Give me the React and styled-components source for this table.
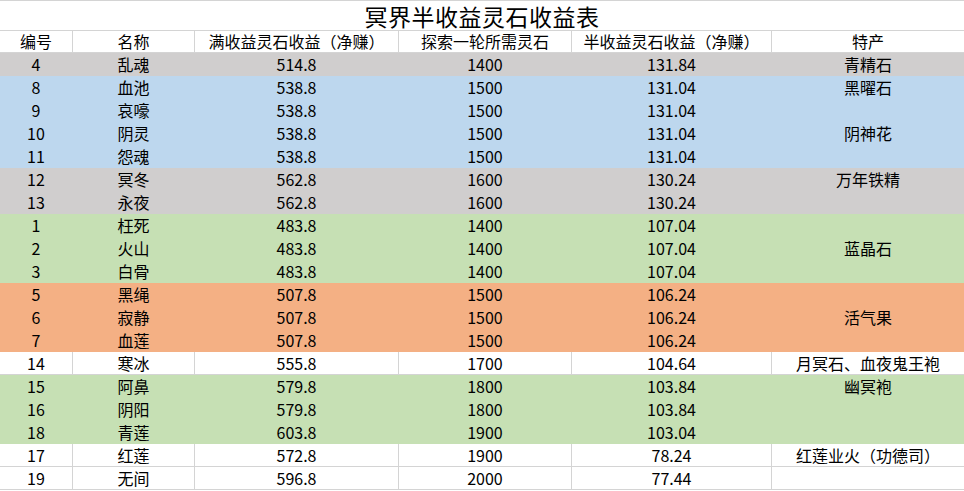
import React from 'react';
import styled, { createGlobalStyle } from 'styled-components';

const GlobalStyle = createGlobalStyle`
    html, body {
        margin: 0;
        padding: 0;
        background: #fff;
    }
    body {
        font-family: "Noto Sans CJK SC", "Noto Sans", sans-serif;
        color: #000;
    }
`;

const fills = {
    white: '#ffffff',
    gray: '#d0cece',
    blue: '#bdd7ee',
    green: '#c6e0b4',
    orange: '#f4b084',
};

const gridLine = '#d4d4d4';

const Sheet = styled.table`
    width: 964px;
    table-layout: fixed;
    border-collapse: separate;
    border-spacing: 0;
    font-size: 16px;
`;

const TitleCell = styled.th`
    height: 29px;
    padding: 0;
    border-top: 1px solid ${gridLine};
    border-bottom: 1px solid ${gridLine};
    font-size: 23px;
    font-weight: 400;
    line-height: 24px;
    vertical-align: middle;
    text-align: center;
    letter-spacing: 0.5px;
`;

const HeadCell = styled.th`
    height: 21px;
    padding: 0;
    border-bottom: 1px solid ${gridLine};
    border-right: 1px solid ${gridLine};
    font-weight: 400;
    line-height: 17px;
    vertical-align: middle;
    text-align: center;
    white-space: nowrap;
    &:last-child {
        border-right: none;
    }
`;

const Cell = styled.td`
    height: 22px;
    padding: 0;
    background: ${props => fills[props.fill]};
    border-bottom: 1px solid ${props => (props.fill === 'white' ? gridLine : fills[props.fill])};
    border-right: 1px solid ${props => (props.fill === 'white' ? gridLine : fills[props.fill])};
    line-height: 17px;
    vertical-align: middle;
    text-align: center;
    white-space: nowrap;
    &:last-child {
        border-right: none;
    }
`;

const columns = [
    { title: '编号', width: 73 },
    { title: '名称', width: 122 },
    { title: '满收益灵石收益（净赚）', width: 204 },
    { title: '探索一轮所需灵石', width: 173 },
    { title: '半收益灵石收益（净赚）', width: 200 },
    { title: '特产', width: 192 },
];

const rows = [
    ['4', '乱魂', '514.8', '1400', '131.84', '青精石', 'gray'],
    ['8', '血池', '538.8', '1500', '131.04', '黑曜石', 'blue'],
    ['9', '哀嚎', '538.8', '1500', '131.04', '', 'blue'],
    ['10', '阴灵', '538.8', '1500', '131.04', '阴神花', 'blue'],
    ['11', '怨魂', '538.8', '1500', '131.04', '', 'blue'],
    ['12', '冥冬', '562.8', '1600', '130.24', '万年铁精', 'gray'],
    ['13', '永夜', '562.8', '1600', '130.24', '', 'gray'],
    ['1', '枉死', '483.8', '1400', '107.04', '', 'green'],
    ['2', '火山', '483.8', '1400', '107.04', '蓝晶石', 'green'],
    ['3', '白骨', '483.8', '1400', '107.04', '', 'green'],
    ['5', '黑绳', '507.8', '1500', '106.24', '', 'orange'],
    ['6', '寂静', '507.8', '1500', '106.24', '活气果', 'orange'],
    ['7', '血莲', '507.8', '1500', '106.24', '', 'orange'],
    ['14', '寒冰', '555.8', '1700', '104.64', '月冥石、血夜鬼王袍', 'white'],
    ['15', '阿鼻', '579.8', '1800', '103.84', '幽冥袍', 'green'],
    ['16', '阴阳', '579.8', '1800', '103.84', '', 'green'],
    ['18', '青莲', '603.8', '1900', '103.04', '', 'green'],
    ['17', '红莲', '572.8', '1900', '78.24', '红莲业火（功德司）', 'white'],
    ['19', '无间', '596.8', '2000', '77.44', '', 'white'],
];

const App = () => {
    return (
        <>
            <GlobalStyle />
            <Sheet>
                <colgroup>
                    {columns.map(col => (
                        <col key={col.title} style={{ width: col.width }} />
                    ))}
                </colgroup>
                <thead>
                    <tr>
                        <TitleCell colSpan={6}>冥界半收益灵石收益表</TitleCell>
                    </tr>
                    <tr>
                        {columns.map(col => (
                            <HeadCell key={col.title}>{col.title}</HeadCell>
                        ))}
                    </tr>
                </thead>
                <tbody>
                    {rows.map(row => {
                        const fill = row[6];
                        return (
                            <tr key={row[0]}>
                                {row.slice(0, 6).map((value, i) => (
                                    <Cell key={i} fill={fill}>{value}</Cell>
                                ))}
                            </tr>
                        );
                    })}
                </tbody>
            </Sheet>
        </>
    );
};

export default App;
